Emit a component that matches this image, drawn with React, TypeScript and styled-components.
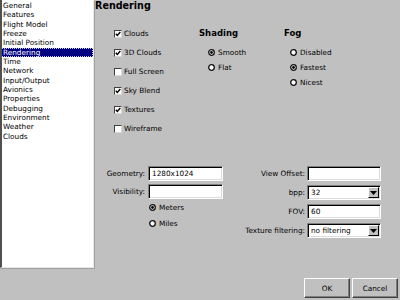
import React from 'react';
import styled, { createGlobalStyle } from 'styled-components';

const GlobalStyle = createGlobalStyle`
  html, body {
    margin: 0;
    padding: 0;
    background: #c0c0c0;
  }
`;

// 창 전체
const Window = styled.div`
  display: flex;
  width: 400px;
  height: 300px;
  background: #c0c0c0;
  font-family: 'DejaVu Sans', sans-serif;
  font-size: 7.3px;
  color: #000;
  overflow: hidden;
`;

const Sidebar = styled.div`
  width: 94px;
  display: flex;
  flex-direction: column;
`;

const PageList = styled.ul`
  list-style: none;
  margin: 0;
  padding: 1px 0 0 0;
  width: 91px;
  height: 266px;
  background: #fff;
  border-left: 2px solid #505050;
  border-right: 1px solid #e8e8e8;
  border-bottom: 1px solid #e8e8e8;
  box-shadow: 1px 1px 0 #a0a0a0;
`;

const PageItem = styled.li<{ $selected?: boolean }>`
  height: 9.33px;
  line-height: 9.33px;
  padding-left: 1px;
  white-space: nowrap;
  box-sizing: border-box;
  background: ${(p) => (p.$selected ? '#000080' : 'transparent')};
  color: ${(p) => (p.$selected ? '#fff' : '#000')};
  border: 1px dotted ${(p) => (p.$selected ? '#c8c8c8' : 'transparent')};
  border-left-width: 0;
  display: flex;
  align-items: center;
`;

const Main = styled.div`
  flex: 1;
  display: flex;
  flex-direction: column;
  padding-left: 1px;
`;

const Title = styled.div`
  height: 12px;
  line-height: 12px;
  font-size: 9.6px;
  font-weight: bold;
`;

const OptionsGrid = styled.div`
  display: grid;
  grid-template-columns: 85px 85px 1fr;
  padding-left: 19px;
  margin-top: 12px;
`;

const Column = styled.div`
  display: flex;
  flex-direction: column;
`;

const CheckRow = styled.label`
  height: 19px;
  display: flex;
  align-items: center;
  gap: 2px;
`;

const GroupTitle = styled.div`
  height: 21px;
  line-height: 19px;
  font-size: 8.5px;
  font-weight: bold;
`;

const RadioRow = styled.label<{ $height?: number; $indent?: number }>`
  height: ${(p) => p.$height ?? 15}px;
  display: flex;
  align-items: center;
  gap: 3px;
  padding-left: ${(p) => p.$indent ?? 0}px;
`;

const Box = styled.span`
  width: 8px;
  height: 8px;
  box-sizing: border-box;
  background: #fff;
  border-top: 1px solid #404040;
  border-left: 1px solid #404040;
  border-right: 1px solid #d8d8d8;
  border-bottom: 1px solid #d8d8d8;
  display: flex;
`;

const FormArea = styled.div`
  display: flex;
  align-items: flex-start;
  margin-top: 28px;
`;

const FieldGrid = styled.div<{ $label: number; $field: number; $gap: number; $rowGap: number; $offset?: number }>`
  display: grid;
  grid-template-columns: ${(p) => `${p.$label}px ${p.$field}px`};
  column-gap: ${(p) => p.$gap}px;
  row-gap: ${(p) => p.$rowGap}px;
  margin-left: ${(p) => p.$offset ?? 0}px;
  align-items: center;
`;

const FieldLabel = styled.span`
  text-align: right;
  white-space: nowrap;
`;

const Field = styled.div`
  height: 15px;
  box-sizing: border-box;
  background: #fff;
  border-top: 1px solid #808080;
  border-left: 1px solid #808080;
  border-right: 1px solid #fff;
  border-bottom: 1px solid #fff;
  box-shadow: inset 1px 1px 0 #000, inset -1px -1px 0 #dcdcdc;
  padding-left: 3px;
  display: flex;
  align-items: center;
  justify-content: space-between;
  white-space: nowrap;
  overflow: hidden;
`;

const DropButton = styled.span`
  width: 11px;
  height: 11px;
  margin-right: 1px;
  box-sizing: border-box;
  background: #c0c0c0;
  border-top: 1px solid #fff;
  border-left: 1px solid #fff;
  border-right: 1px solid #000;
  border-bottom: 1px solid #000;
  display: flex;
  align-items: center;
  justify-content: center;
`;

// 단위 선택 라디오 묶음
const RadioStack = styled.div`
  grid-column: 2;
  margin-top: -3px;
  display: flex;
  flex-direction: column;
`;

const Footer = styled.div`
  margin-top: auto;
  display: flex;
  justify-content: flex-end;
  gap: 2px;
  padding: 0 2px 2px 0;
`;

const Button = styled.button`
  width: 46px;
  height: 20px;
  padding: 0;
  background: #c0c0c0;
  font-family: 'DejaVu Sans', sans-serif;
  font-size: 7.3px;
  color: #000;
  border-top: 1px solid #fff;
  border-left: 1px solid #fff;
  border-right: 1px solid #404040;
  border-bottom: 1px solid #404040;
  box-shadow: inset -1px -1px 0 #808080;
`;

function Check({ checked }: { checked?: boolean }) {
  return (
    <Box>
      {checked && (
        <svg width="6" height="6" viewBox="0 0 6 6">
          <polyline points="0.8,2.8 2.3,4.4 5.3,1" fill="none" stroke="#000" strokeWidth="1.4" />
        </svg>
      )}
    </Box>
  );
}

function Radio({ checked }: { checked?: boolean }) {
  return (
    <svg width="7" height="7" viewBox="0 0 7 7">
      <circle cx="3.5" cy="3.5" r="2.8" fill="#fff" stroke="#111" strokeWidth="1.3" />
      {checked && <circle cx="3.5" cy="3.5" r="1.4" fill="#000" />}
    </svg>
  );
}

function Arrow() {
  return (
    <svg width="7" height="4" viewBox="0 0 7 4">
      <polygon points="0,0 7,0 3.5,4" fill="#000" />
    </svg>
  );
}

const pages = [
  'General', 'Features', 'Flight Model', 'Freeze', 'Initial Position', 'Rendering', 'Time',
  'Network', 'Input/Output', 'Avionics', 'Properties', 'Debugging', 'Environment', 'Weather', 'Clouds',
];

const checks = [
  { label: 'Clouds', on: true },
  { label: '3D Clouds', on: true },
  { label: 'Full Screen', on: false },
  { label: 'Sky Blend', on: true },
  { label: 'Textures', on: true },
  { label: 'Wireframe', on: false },
];

export default function App() {
  return (
    <>
      <GlobalStyle />
      <Window>
        <Sidebar>
          <PageList>
            {pages.map((p) => (
              <PageItem key={p} $selected={p === 'Rendering'}>{p}</PageItem>
            ))}
          </PageList>
        </Sidebar>

        <Main>
          <Title>Rendering</Title>

          <OptionsGrid>
            <Column>
              {checks.map((c) => (
                <CheckRow key={c.label}>
                  <Check checked={c.on} />
                  {c.label}
                </CheckRow>
              ))}
            </Column>
            <Column>
              <GroupTitle>Shading</GroupTitle>
              <RadioRow $indent={9}><Radio checked />Smooth</RadioRow>
              <RadioRow $indent={9}><Radio />Flat</RadioRow>
            </Column>
            <Column>
              <GroupTitle>Fog</GroupTitle>
              <RadioRow $indent={6}><Radio />Disabled</RadioRow>
              <RadioRow $indent={6}><Radio checked />Fastest</RadioRow>
              <RadioRow $indent={6}><Radio />Nicest</RadioRow>
            </Column>
          </OptionsGrid>

          <FormArea>
            <FieldGrid $label={50} $field={75} $gap={3} $rowGap={3}>
              <FieldLabel>Geometry:</FieldLabel>
              <Field>1280x1024</Field>
              <FieldLabel>Visibility:</FieldLabel>
              <Field />
              <RadioStack>
                <RadioRow $height={16} $indent={1}><Radio checked />Meters</RadioRow>
                <RadioRow $height={16} $indent={1}><Radio />Miles</RadioRow>
              </RadioStack>
            </FieldGrid>

            <FieldGrid $label={80} $field={74} $gap={2} $rowGap={4} $offset={2}>
              <FieldLabel>View Offset:</FieldLabel>
              <Field />
              <FieldLabel>bpp:</FieldLabel>
              <Field>32<DropButton><Arrow /></DropButton></Field>
              <FieldLabel>FOV:</FieldLabel>
              <Field>60</Field>
              <FieldLabel>Texture filtering:</FieldLabel>
              <Field>no filtering<DropButton><Arrow /></DropButton></Field>
            </FieldGrid>
          </FormArea>

          <Footer>
            <Button>OK</Button>
            <Button>Cancel</Button>
          </Footer>
        </Main>
      </Window>
    </>
  );
}
